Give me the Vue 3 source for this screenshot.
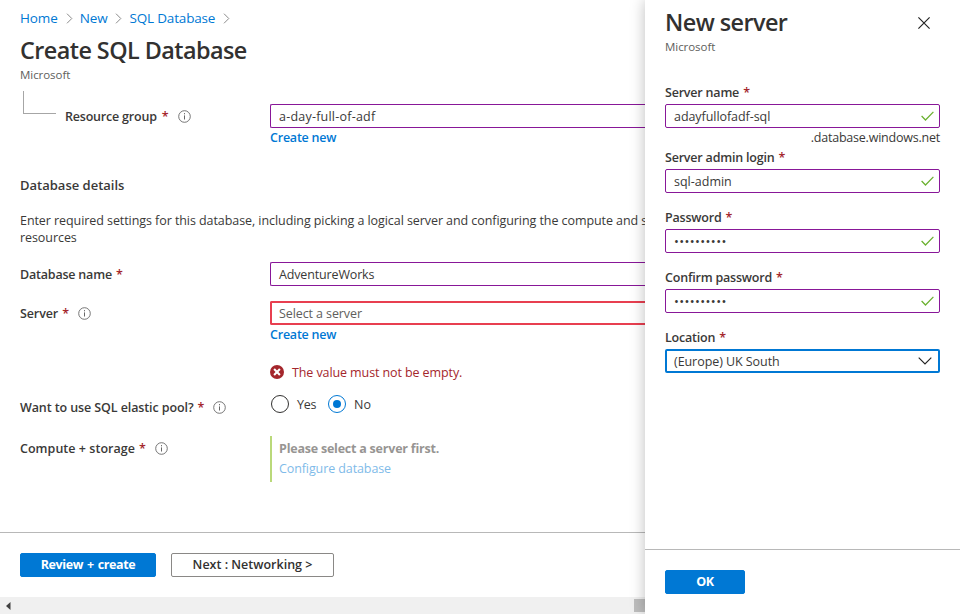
<script setup>
const crumbs = ['Home', 'New', 'SQL Database']
const fields = [
  { label: 'Server name', cls: 'f-name', value: 'adayfullofadf-sql', vcls: 'v-name', suffix: '.database.windows.net' },
  { label: 'Server admin login', cls: 'f-login', value: 'sql-admin', vcls: 'v-login' },
  { label: 'Password', cls: 'f-pass', value: '••••••••••', vcls: 'dots' },
  { label: 'Confirm password', cls: 'f-confirm', value: '••••••••••', vcls: 'dots' },
]
</script>

<template>
  <div class="page">
    <main class="main">
      <nav class="crumbs">
        <template v-for="(c, i) in crumbs" :key="c">
          <a :class="'crumb c' + i">{{ c }}</a>
          <svg class="chev" width="7" height="11" viewBox="0 0 7 11"><path d="M1 .7 5.8 5.5 1 10.3" fill="none" stroke="#8a8a8a" /></svg>
        </template>
      </nav>
      <h1 class="title">Create SQL Database</h1>
      <div class="sub">Microsoft</div>

      <div class="row first">
        <div class="tree"></div>
        <div class="label indent"><span class="l-group">Resource group</span><b>*</b><svg class="info" width="13" height="13" viewBox="0 0 13 13"><circle cx="6.5" cy="6.5" r="5.8" fill="none" stroke="#666" stroke-width=".9" /><path d="M6.5 5.4v4.1M6.5 3.1v1.2" stroke="#666" /></svg></div>
        <div class="input"><span class="v-group">a-day-full-of-adf</span></div>
      </div>
      <a class="create">Create new</a>

      <h2 class="section"><span>Database details</span></h2>
      <p class="para"><span class="p1">Enter required settings for this database, including picking a logical server and configuring the compute and s</span><br /><span class="p2">resources</span></p>

      <div class="row db">
        <div class="label"><span class="l-db">Database name</span><b>*</b></div>
        <div class="input"><span class="v-db">AdventureWorks</span></div>
      </div>
      <div class="row server">
        <div class="label"><span class="l-server">Server</span><b>*</b><svg class="info" width="13" height="13" viewBox="0 0 13 13"><circle cx="6.5" cy="6.5" r="5.8" fill="none" stroke="#666" stroke-width=".9" /><path d="M6.5 5.4v4.1M6.5 3.1v1.2" stroke="#666" /></svg></div>
        <div class="input invalid"><span class="v-server">Select a server</span></div>
      </div>
      <a class="create">Create new</a>
      <div class="error">
        <svg width="14" height="14" viewBox="0 0 14 14"><circle cx="7" cy="7" r="7" fill="#a4262c" /><path d="m4.1 4.1 5.8 5.8m0-5.8L4.1 9.9" stroke="#fff" stroke-width="2.1" /></svg>
        <span>The value must not be empty.</span>
      </div>

      <div class="row pool">
        <div class="label"><span class="l-pool">Want to use SQL elastic pool?</span><b>*</b><svg class="info" width="13" height="13" viewBox="0 0 13 13"><circle cx="6.5" cy="6.5" r="5.8" fill="none" stroke="#666" stroke-width=".9" /><path d="M6.5 5.4v4.1M6.5 3.1v1.2" stroke="#666" /></svg></div>
        <div class="radios">
          <i class="radio"></i><span class="yes">Yes</span>
          <i class="radio on"></i><span class="no">No</span>
        </div>
      </div>
      <div class="row compute">
        <div class="label"><span class="l-compute">Compute + storage</span><b>*</b><svg class="info" width="13" height="13" viewBox="0 0 13 13"><circle cx="6.5" cy="6.5" r="5.8" fill="none" stroke="#666" stroke-width=".9" /><path d="M6.5 5.4v4.1M6.5 3.1v1.2" stroke="#666" /></svg></div>
        <div class="config">
          <strong>Please select a server first.</strong>
          <a>Configure database</a>
        </div>
      </div>

      <footer class="foot">
        <button class="btn primary review"><span>Review + create</span></button>
        <button class="btn next"><span>Next : Networking &gt;</span></button>
      </footer>
      <div class="scroll">
        <svg width="5" height="8" viewBox="0 0 5 8"><path d="M4.5 0v8L0 4z" fill="#404040" /></svg>
        <div class="thumb"></div>
      </div>
    </main>

    <aside class="panel">
      <header class="phead">
        <div>
          <h1 class="ptitle">New server</h1>
          <div class="sub psub">Microsoft</div>
        </div>
        <svg class="close" width="12" height="12" viewBox="0 0 12 12"><path d="m.4.4 11.2 11.2m0-11.2L.4 11.6" stroke="#222" stroke-width="1.15" /></svg>
      </header>
      <div class="fields">
        <div v-for="f in fields" :key="f.label" class="field">
          <div class="plabel"><span :class="f.cls">{{ f.label }}</span><b>*</b></div>
          <div class="input">
            <span :class="f.vcls">{{ f.value }}</span>
            <svg class="check" width="13" height="10" viewBox="0 0 13 10"><path d="m.6 5 3.9 4L12.4.9" fill="none" stroke="#6bb130" stroke-width="1.25" /></svg>
          </div>
          <div class="below"><span v-if="f.suffix">{{ f.suffix }}</span></div>
        </div>
        <div class="field">
          <div class="plabel"><span class="f-loc">Location</span><b>*</b></div>
          <div class="input focus">
            <span class="v-loc">(Europe) UK South</span>
            <svg class="drop" width="14" height="8" viewBox="0 0 14 8"><path d="m.7.7 6.3 6.3L13.3.7" fill="none" stroke="#222" stroke-width="1.15" /></svg>
          </div>
        </div>
      </div>
      <footer class="pfoot"><button class="btn primary ok"><span>OK</span></button></footer>
    </aside>
  </div>
</template>

<style>
body { margin: 0; overflow: hidden; background: #fff; }
</style>

<style scoped>
.page { display: flex; width: 960px; height: 614px; overflow: hidden; font: 12.5px/18px "Open Sans", "Noto Sans", sans-serif; color: #3a3938; }
.page * { box-sizing: border-box; white-space: nowrap; }
.main { width: 645px; height: 614px; overflow: hidden; display: flex; flex-direction: column; }
.main > * { flex-shrink: 0; }
h1, h2, p { margin: 0; }
a { color: #0078d4; }
.crumbs { display: flex; align-items: center; height: 20px; margin: 8px 0 0 20px; font-size: 13.5px; letter-spacing: -.13px; }
.c2 { letter-spacing: -.17px; }
.chev { margin: 0 7px 0 8px; }
.title, .ptitle { font-size: 23.4px; line-height: 34px; font-weight: 600; height: 34px; letter-spacing: -.56px; color: #323130; }
.title { margin: 5px 0 0 20px; }
.sub { margin-left: 20px; height: 15px; line-height: 15px; font-size: 11.5px; color: #605e5c; letter-spacing: -.05px; }
.row { display: flex; padding-left: 20px; }
.first { margin-top: 9px; height: 37px; padding: 13px 0 0 23px; }
.tree { width: 33px; height: 23px; margin-top: -13px; border: solid #a6a6a6; border-width: 0 0 1px 1px; }
.label { width: 250px; height: 24px; padding-top: 1px; display: flex; align-items: center; font-weight: 550; letter-spacing: -.1px; }
.label.indent { width: 214px; padding: 1px 0 0 9px; }
.l-db, .l-group { letter-spacing: -.2px; }
.l-group { margin-right: 1px; }
.l-compute { letter-spacing: .03px; }
b { color: #a4262c; font-weight: 600; margin-left: 4px; }
.info { margin: 0 0 0 9px; }
.input { flex: 1; height: 24px; border: 1px solid #881798; border-radius: 2px; padding: 1px 8px 0; display: flex; align-items: center; }
.main .input { border-right: 0; border-radius: 2px 0 0 2px; }
.main .input.invalid { border: 2px solid #e83f50; border-right: 0; padding: 1px 7px 0; color: #605e5c; }
.v-group { letter-spacing: .22px; }
.v-db { letter-spacing: -.15px; }
.v-server { letter-spacing: -.1px; }
.create { display: block; margin: 1px 0 0 270px; height: 18px; font-weight: 550; letter-spacing: -.22px; }
.section { margin: 28px 0 0 20px; height: 20px; line-height: 20px; font-size: 13px; font-weight: 600; }
.para { margin: 17px 0 0 20px; line-height: 17px; height: 34px; letter-spacing: -.07px; }
.db { margin-top: 16px; }
.server { margin-top: 15px; }
.error { display: flex; align-items: center; gap: 8px; height: 18px; margin: 19px 0 0 270px; color: #a4262c; letter-spacing: -.1px; }
.error span { padding-top: 1px; }
.pool { height: 24px; margin-top: 14px; }
.radios { display: flex; align-items: center; height: 20px; margin-top: -1px; }
.radios span { padding-top: 1px; }
.radio { width: 18px; height: 18px; border: 1px solid #323130; border-radius: 50%; margin: 0 8px 0 1px; display: flex; }
.yes { width: 30px; letter-spacing: -.3px; }
.radio.on { border-color: #0078d4; align-items: center; justify-content: center; }
.radio.on::after { content: ""; width: 8px; height: 8px; border-radius: 50%; background: #0078d4; }
.compute { margin-top: 17px; height: 46px; }
.config { border-left: 2px solid #bad97a; padding: 3px 0 0 7px; line-height: 20px; height: 46px; display: flex; flex-direction: column; }
.config strong { color: #979593; font-weight: 700; letter-spacing: -.22px; }
.config a { color: #7fbbe9; letter-spacing: -.1px; }
.foot { margin-top: 50px; height: 65px; border-top: 1px solid #b8b8b8; padding: 20px 0 0 20px; display: flex; gap: 15px; }
.btn { height: 24px; padding: 0; font: 550 12.5px/22px "Open Sans", "Noto Sans", sans-serif; border: 1px solid #8a8886; border-radius: 2px; background: #fff; color: #323130; }
.primary { background: #0078d4; border-color: #0078d4; color: #fff; font-weight: 700; letter-spacing: -.37px; }
.review { width: 136px; word-spacing: 1px; }
.next { width: 163px; }
.scroll { height: 17px; background: #f0f0f0; display: flex; justify-content: space-between; align-items: center; padding-left: 6px; }
.thumb { width: 11px; height: 13px; background: #bdbdbd; }
.panel { position: relative; width: 315px; height: 614px; background: #fff; box-shadow: 0 0 14px rgba(0, 0, 0, .26); display: flex; flex-direction: column; }
.phead { display: flex; justify-content: space-between; height: 83px; padding: 5px 30px 0 20px; }
.psub { margin: 0; }
.close { margin-top: 12px; }
.fields { flex: 1; padding: 0 20px; }
.field { height: 60px; }
.field:first-child { height: 65px; }
.plabel { height: 21px; padding-top: 1px; line-height: 18px; display: flex; font-weight: 550; letter-spacing: -.2px; }
.fields .input { justify-content: space-between; padding-right: 5px; }
.check, .drop { margin-top: -1px; }
.fields .input.focus { border: 2px solid #0078d4; padding: 1px 6px 0 7px; }
.v-name, .v-loc { letter-spacing: -.06px; }
.dots { font-size: 13px; letter-spacing: .38px; margin-top: -2px; }
.below { text-align: right; margin-top: 1px; height: 18px; letter-spacing: -.22px; }
.pfoot { height: 65px; border-top: 1px solid #b8b8b8; padding: 20px; }
.ok { width: 80px; display: block; }
</style>
